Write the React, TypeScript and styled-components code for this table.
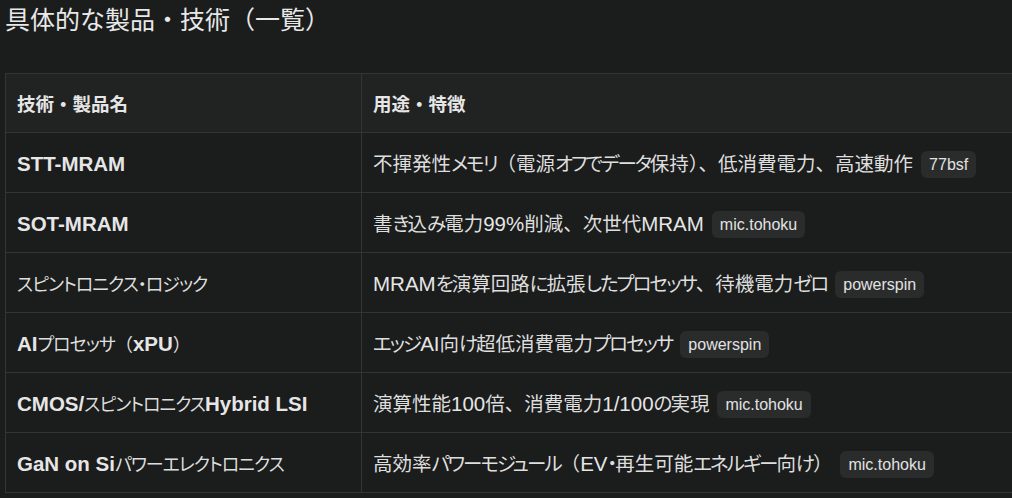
import styled, { createGlobalStyle } from 'styled-components';

const GlobalStyle = createGlobalStyle`
  html, body {
    margin: 0;
    padding: 0;
    background-color: #1b1c1c;
    overflow: hidden;
  }

  body {
    color: #e4e4e4;
    font-family: "Liberation Sans", "Noto Sans CJK JP", sans-serif;
  }
`;

const Page = styled.main`
  width: 1012px;
  height: 498px;
  padding: 0 0 0 5px;
  box-sizing: border-box;
  overflow: hidden;
`;

const Title = styled.h2`
  margin: 0;
  font-family: "Noto Sans CJK JP", sans-serif;
  font-size: 25px;
  font-weight: 400;
  line-height: 37px;
  color: #e8e8e8;
`;

const Table = styled.table`
  margin-top: 36px;
  width: 1060px;
  table-layout: fixed;
  border-collapse: collapse;
  font-family: "Noto Sans CJK JP", sans-serif;
`;

const HeadRow = styled.tr`
  height: 59px;
  background-color: #212222;
`;

const Row = styled.tr`
  height: 60px;
`;

const HeadCell = styled.th`
  border: 1px solid #333535;
  padding: 0 11px;
  text-align: left;
  font-size: 18.5px;
  font-weight: 700;
  color: #e6e6e6;
`;

const Cell = styled.td<{ $name?: boolean }>`
  border: 1px solid #333535;
  padding: 0 12px 0 11px;
  white-space: nowrap;
  vertical-align: middle;
  font-size: ${(p) => (p.$name ? '18px' : '19.5px')};
  color: #dedede;
`;

const Latin = styled.span<{ $bold?: boolean }>`
  font-family: "Liberation Sans", sans-serif;
  font-size: 20.5px;
  font-weight: ${(p) => (p.$bold ? 700 : 400)};
  color: #e6e6e6;
`;

// kana and ・ run narrow in the reference's Japanese UI font
const Kana = styled.span<{ $track: number }>`
  font-feature-settings: "palt";
  letter-spacing: ${(p) => p.$track}px;
`;

const Badge = styled.span`
  display: inline-block;
  margin-left: 8px;
  padding: 0 8px;
  height: 27px;
  line-height: 27px;
  border-radius: 6px;
  background-color: #2a2c2c;
  font-family: "Liberation Sans", sans-serif;
  font-size: 16px;
  color: #e2e2e2;
  vertical-align: 1px;
`;

function Mixed({ text, bold }: { text: string; bold?: boolean }) {
  const parts = text.split(/([\x20-\x7E]+|[\u3040-\u30FF]+)/).filter((s) => s !== '');
  return (
    <>
      {parts.map((part, i) => {
        if (/^[\x20-\x7E]+$/.test(part)) {
          return (
            <Latin key={i} $bold={bold}>
              {part}
            </Latin>
          );
        }
        if (/^[\u3040-\u30FF]+$/.test(part)) {
          return (
            <Kana key={i} $track={bold ? -1 : -2}>
              {part}
            </Kana>
          );
        }
        return <span key={i}>{part}</span>;
      })}
    </>
  );
}

const rows = [
  { name: 'STT-MRAM', desc: '不揮発性メモリ（電源オフでデータ保持）、低消費電力、高速動作', src: '77bsf' },
  { name: 'SOT-MRAM', desc: '書き込み電力99%削減、次世代MRAM', src: 'mic.tohoku' },
  { name: 'スピントロニクス・ロジック', desc: 'MRAMを演算回路に拡張したプロセッサ、待機電力ゼロ', src: 'powerspin' },
  { name: 'AIプロセッサ（xPU）', desc: 'エッジAI向け超低消費電力プロセッサ', src: 'powerspin' },
  { name: 'CMOS/スピントロニクスHybrid LSI', desc: '演算性能100倍、消費電力1/100の実現', src: 'mic.tohoku' },
  { name: 'GaN on Siパワーエレクトロニクス', desc: '高効率パワーモジュール（EV・再生可能エネルギー向け）', src: 'mic.tohoku' },
];

function App() {
  return (
    <Page>
      <GlobalStyle />
      <Title>具体的な製品・技術（一覧）</Title>
      <Table>
        <colgroup>
          <col style={{ width: 356 }} />
          <col />
        </colgroup>
        <thead>
          <HeadRow>
            <HeadCell>技術・製品名</HeadCell>
            <HeadCell>用途・特徴</HeadCell>
          </HeadRow>
        </thead>
        <tbody>
          {rows.map((r) => (
            <Row key={r.name}>
              <Cell $name>
                <Mixed text={r.name} bold />
              </Cell>
              <Cell>
                <Mixed text={r.desc} />
                <Badge>{r.src}</Badge>
              </Cell>
            </Row>
          ))}
        </tbody>
      </Table>
    </Page>
  );
}

export default App;
